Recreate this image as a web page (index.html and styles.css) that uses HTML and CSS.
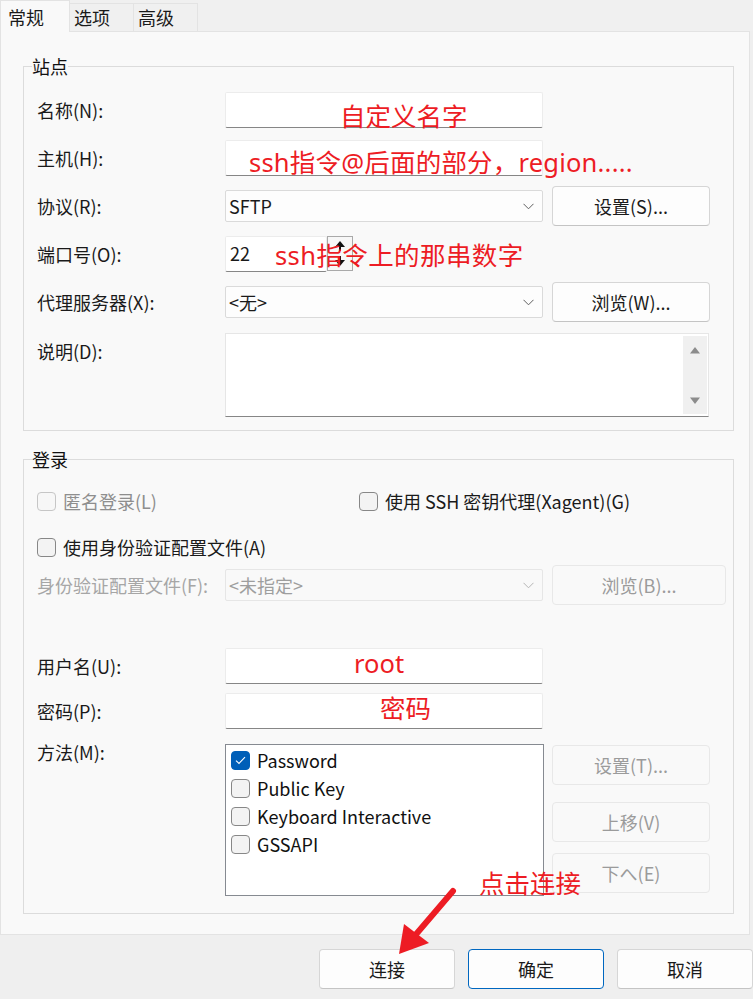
FILE: index.html
```html
<!DOCTYPE html>
<html lang="zh-CN">
<head>
<meta charset="utf-8">
<title>会话属性</title>
<link rel="stylesheet" href="styles.css">
</head>
<body>
<div class="page">
  <div class="tabs">
    <div class="tab active">常规</div>
    <div class="tab">选项</div>
    <div class="tab">高级</div>
  </div>

  <div class="panel">
    <fieldset class="group site">
      <legend>站点</legend>
      <div class="row">
        <span class="lbl">名称(N):</span>
        <div class="input"></div>
      </div>
      <div class="row">
        <span class="lbl">主机(H):</span>
        <div class="input"></div>
      </div>
      <div class="row">
        <span class="lbl">协议(R):</span>
        <div class="select"><span>SFTP</span><svg class="chev" width="11" height="7" viewBox="0 0 11 7"><path d="M0.5 0.8 L5.5 5.8 L10.5 0.8" fill="none" stroke="#5f5f5f" stroke-width="1"/></svg></div>
        <div class="btn">设置(S)...</div>
      </div>
      <div class="row">
        <span class="lbl">端口号(O):</span>
        <div class="port">
          <div class="input port-input">22</div>
          <div class="spin">
            <svg width="24" height="33" viewBox="0 0 24 33"><path d="M7 10 L12 4 L17 10 Z" fill="#111"/><path d="M12 9 V14" stroke="#111" stroke-width="2"/><path d="M12 19 V24" stroke="#111" stroke-width="2"/><path d="M7 23 L12 29 L17 23 Z" fill="#111"/></svg>
          </div>
        </div>
      </div>
      <div class="row">
        <span class="lbl">代理服务器(X):</span>
        <div class="select"><span>&lt;无&gt;</span><svg class="chev" width="11" height="7" viewBox="0 0 11 7"><path d="M0.5 0.8 L5.5 5.8 L10.5 0.8" fill="none" stroke="#5f5f5f" stroke-width="1"/></svg></div>
        <div class="btn">浏览(W)...</div>
      </div>
      <div class="row row-top desc-row">
        <span class="lbl desc-lbl">说明(D):</span>
        <div class="textarea">
          <div class="scroll">
            <svg width="12" height="8" viewBox="0 0 12 8"><path d="M1 7.5 L6 1 L11 7.5 Z" fill="#8c8c8c"/></svg>
            <svg width="12" height="8" viewBox="0 0 12 8"><path d="M1 0.5 L6 7 L11 0.5 Z" fill="#8c8c8c"/></svg>
          </div>
        </div>
      </div>
    </fieldset>

    <fieldset class="group login">
      <legend>登录</legend>
      <div class="row check-row row-a">
        <label class="check disabled first-col"><span class="box"></span>匿名登录(L)</label>
        <label class="check"><span class="box"></span>使用 SSH 密钥代理(Xagent)(G)</label>
      </div>
      <div class="row check-row row-b">
        <label class="check"><span class="box"></span>使用身份验证配置文件(A)</label>
      </div>
      <div class="row row-c">
        <span class="lbl disabled-text">身份验证配置文件(F):</span>
        <div class="select disabled"><span>&lt;未指定&gt;</span><svg class="chev" width="11" height="7" viewBox="0 0 11 7"><path d="M0.5 0.8 L5.5 5.8 L10.5 0.8" fill="none" stroke="#b5b5b5" stroke-width="1"/></svg></div>
        <div class="btn disabled wide">浏览(B)...</div>
      </div>
      <div class="row field-row user-row">
        <span class="lbl">用户名(U):</span>
        <div class="input"></div>
      </div>
      <div class="row field-row pass-row">
        <span class="lbl">密码(P):</span>
        <div class="input"></div>
      </div>
      <div class="row row-top method-row">
        <span class="lbl method-lbl">方法(M):</span>
        <div class="listbox">
          <div class="item"><span class="box checked"><svg width="11" height="9" viewBox="0 0 11 9"><path d="M1 4.6 L4 7.4 L10 1.2" fill="none" stroke="#fff" stroke-width="1.1"/></svg></span>Password</div>
          <div class="item"><span class="box"></span>Public Key</div>
          <div class="item"><span class="box"></span>Keyboard Interactive</div>
          <div class="item"><span class="box"></span>GSSAPI</div>
        </div>
        <div class="side-btns">
          <div class="btn disabled b-set">设置(T)...</div>
          <div class="btn disabled b-up">上移(V)</div>
          <div class="btn disabled b-down">下へ(E)</div>
        </div>
      </div>
    </fieldset>
  </div>

  <div class="footer">
    <div class="btn foot">连接</div>
    <div class="btn foot primary">确定</div>
    <div class="btn foot">取消</div>
  </div>

  <div class="note n-name">自定义名字</div>
  <div class="note n-host">ssh指令@后面的部分，region.....</div>
  <div class="note n-port">ssh指令上的那串数字</div>
  <div class="note n-user">root</div>
  <div class="note n-pass">密码</div>
  <div class="note n-conn">点击连接</div>
  <svg class="arrow" width="753" height="999" viewBox="0 0 753 999">
    <path d="M453 891 L412 939" stroke="#ed1c24" stroke-width="6" stroke-linecap="round" fill="none"/>
    <path d="M399 954 L404 924 L429 943 Z" fill="#ed1c24"/>
  </svg>
</div>
</body>
</html>
```

FILE: styles.css
```css
* { box-sizing: border-box; }

html, body {
  margin: 0;
  padding: 0;
}

body {
  width: 753px;
  height: 999px;
  overflow: hidden;
  background: #efefef;
  font-family: "Noto Sans CJK SC", "Noto Sans", sans-serif;
  font-size: 18px;
  color: #1a1a1a;
}

.page {
  position: relative;
  width: 753px;
  height: 999px;
  background: #efefef;
}

/* ---------- tabs ---------- */
.tabs {
  display: flex;
  align-items: flex-end;
  height: 31px;
  background: #f0f0f0;
}

.tab {
  height: 28px;
  width: 64px;
  padding-left: 4px;
  line-height: 27px;
  font-size: 18px;
  background: #f0f0f0;
  border: 1px solid #e3e3e3;
  border-left: none;
  border-bottom: none;
}

.tab.active {
  position: relative;
  z-index: 2;
  width: 70px;
  height: 32px;
  margin-bottom: -1px;
  padding-left: 7px;
  line-height: 32px;
  background: #f9f9f9;
  border-left: 1px solid #e3e3e3;
}

/* ---------- panel ---------- */
.panel {
  width: 750px;
  background: #f9f9f9;
  border: 1px solid #e3e3e3;
  padding: 0 15px 20px 22px;
}

.group {
  margin: 0;
  border: 1px solid #dcdcdc;
  padding: 9px 15px 13px 13px;
  min-width: 0;
}

.group legend {
  padding: 0;
  margin-left: -5px;
  line-height: 22px;
  font-size: 18px;
  color: #111;
}

.site { margin-top: 23px; }
.login { margin-top: 17px; padding-bottom: 17px; }

.row {
  display: flex;
  align-items: center;
  height: 48px;
}

.row-top { align-items: flex-start; height: auto; }

.lbl {
  width: 188px;
  flex: none;
  font-size: 18px;
  line-height: 20px;
  color: #1a1a1a;
}

.disabled-text { color: #a6a6a6; }

.input {
  width: 318px;
  height: 36px;
  flex: none;
  background: #fff;
  border: 1px solid #ececec;
  border-bottom: 1px solid #868686;
  border-radius: 2px;
  padding-left: 4px;
  font-size: 18px;
  line-height: 33px;
}

.port { display: flex; width: 128px; flex: none; }
.port-input { width: 102px; }

.spin {
  width: 26px;
  height: 35px;
  border: 1px solid #a9a9a9;
  background: #f7f7f7;
}
.spin svg { display: block; }

.select {
  width: 318px;
  height: 32px;
  flex: none;
  display: flex;
  align-items: center;
  justify-content: space-between;
  padding: 0 8px 0 3px;
  background: #fdfdfd;
  border: 1px solid #dadada;
  border-radius: 2px;
  font-size: 18px;
}
.select.disabled {
  background: #f9f9f9;
  border-color: #e6e6e6;
  color: #9e9e9e;
}

.btn {
  flex: none;
  width: 158px;
  height: 40px;
  margin-left: 9px;
  display: flex;
  align-items: center;
  justify-content: center;
  background: #fdfdfd;
  border: 1px solid #d6d6d6;
  border-bottom-color: #c4c4c4;
  border-radius: 4px;
  font-size: 18px;
  color: #1a1a1a;
}
.btn.disabled {
  background: #f9f9f9;
  border-color: #e8e8e8;
  color: #9b9b9b;
}
.btn.wide { width: 174px; }

/* description */
.desc-row { margin-top: 7px; }
.desc-lbl { margin-top: 8px; }

.textarea {
  width: 484px;
  height: 84px;
  flex: none;
  display: flex;
  justify-content: flex-end;
  background: #fff;
  border: 1px solid #e6e6e6;
  border-bottom: 1px solid #868686;
  padding: 2px 1px 2px 0;
}

.scroll {
  width: 24px;
  background: #f0f0f0;
  display: flex;
  flex-direction: column;
  justify-content: space-between;
  align-items: center;
  padding: 10px 0 9px;
}
.scroll svg { display: block; }

/* login */
.check-row { height: 30px; }
.row-a { margin-top: 7px; }
.row-b { margin-top: 16px; }
.row-c { height: 40px; margin-top: 3px; }

.check {
  display: flex;
  align-items: center;
  gap: 7px;
  font-size: 18px;
  color: #1a1a1a;
}
.check.first-col { width: 322px; }
.check.disabled { color: #8e8e8e; }

.box {
  width: 19px;
  height: 19px;
  flex: none;
  border: 1px solid #878787;
  border-radius: 4px;
  background: #f3f3f3;
  display: flex;
  align-items: center;
  justify-content: center;
}
.check.disabled .box {
  border-color: #c6c6c6;
  background: #f7f7f7;
}
.box.checked {
  background: #005fb8;
  border-color: #005fb8;
}

.field-row { height: 36px; }
.user-row { margin-top: 43px; }
.pass-row { margin-top: 9px; }

.method-row { margin-top: 15px; }
.method-lbl { line-height: 16px; margin-top: 0; }

.listbox {
  width: 319px;
  height: 152px;
  flex: none;
  background: #fff;
  border: 1px solid #868a91;
  padding: 1px 0 0 5px;
}

.item {
  display: flex;
  align-items: center;
  gap: 7px;
  height: 28px;
  font-size: 18px;
  color: #111;
}

.side-btns {
  display: flex;
  flex-direction: column;
  margin-left: 8px;
}
.side-btns .btn { margin-left: 0; }
.b-set { margin-top: 1px; }
.b-up { margin-top: 17px; }
.b-down { margin-top: 11px; }

/* footer */
.footer {
  display: flex;
  justify-content: flex-end;
  gap: 13px;
  padding-top: 14px;
}
.btn.foot {
  width: 136px;
  margin-left: 0;
  font-size: 18px;
}
.btn.primary {
  border: 1px solid #0067c0;
}

/* annotations */
.note {
  position: absolute;
  font-size: 25.5px;
  line-height: 25px;
  color: #ed1c24;
  white-space: nowrap;
  font-family: "Noto Sans", "Noto Sans CJK SC", sans-serif;
}
.n-name { left: 340px; top: 104px; }
.n-host { left: 249px; top: 150px; letter-spacing: 0.2px; }
.n-port { left: 275px; top: 243px; letter-spacing: 0.4px; }
.n-user { left: 354px; top: 651px; }
.n-pass { left: 380px; top: 696px; }
.n-conn { left: 479px; top: 871px; }

.arrow {
  position: absolute;
  left: 0;
  top: 0;
  pointer-events: none;
}
```
